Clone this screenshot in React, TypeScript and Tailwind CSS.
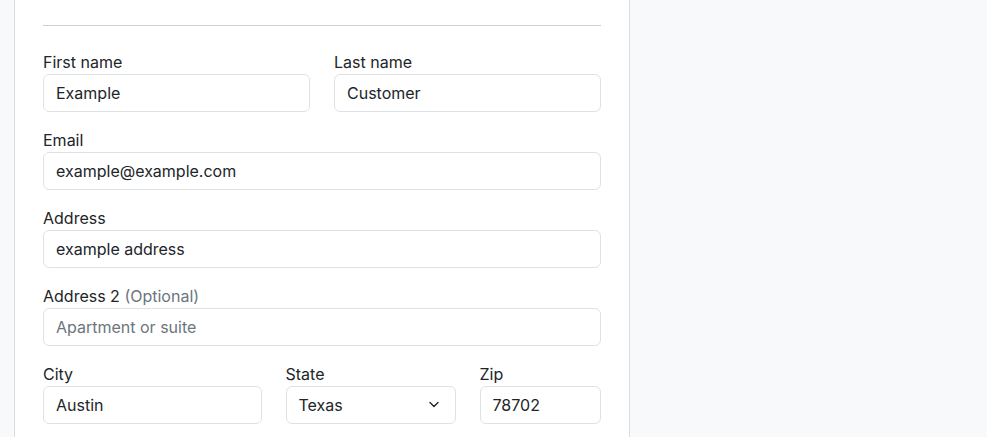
import React from 'react';

const inputCls =
  'block w-full h-[38px] px-3 py-1.5 text-base leading-6 text-[#212529] bg-white border border-[#dee2e6] rounded-md outline-none placeholder:text-[#6c757d]';

const labelCls = 'block text-base leading-6 text-[#212529]';

function Field({
  label,
  optional,
  children,
  className = '',
}: {
  label: string;
  optional?: boolean;
  children: React.ReactNode;
  className?: string;
}) {
  return (
    <div className={className}>
      <label className={labelCls}>
        {label}
        {optional && <span className="text-[#6c757d]"> (Optional)</span>}
      </label>
      {children}
    </div>
  );
}

export default function App() {
  return (
    <div
      className="flex w-full h-[437px] overflow-hidden bg-[#f8f9fb]"
      style={{ fontFamily: 'Inter, "Liberation Sans", Arial, sans-serif' }}
    >
      <div className="w-[15px] shrink-0 border-r border-[#d9dbde]" />
      <div className="w-[615px] shrink-0 bg-white border-r border-[#d9dbde] px-[28px]">
        <hr className="mt-[25px] border-0 border-t border-[#cfd1d4]" />
        <div className="grid grid-cols-12 gap-x-6 gap-y-4 mt-[24px]">
          <Field label="First name" className="col-span-6">
            <input className={inputCls} defaultValue="Example" />
          </Field>
          <Field label="Last name" className="col-span-6">
            <input className={inputCls} defaultValue="Customer" />
          </Field>
          <Field label="Email" className="col-span-12">
            <input className={inputCls} defaultValue="example@example.com" />
          </Field>
          <Field label="Address" className="col-span-12">
            <input className={inputCls} defaultValue="example address" />
          </Field>
          <Field label="Address 2" optional className="col-span-12">
            <input className={inputCls} placeholder="Apartment or suite" />
          </Field>
          <Field label="City" className="col-span-5">
            <input className={inputCls} defaultValue="Austin" />
          </Field>
          <Field label="State" className="col-span-4">
            <div className="relative">
              <select className={inputCls + ' appearance-none pr-9'} defaultValue="Texas">
                <option>Texas</option>
                <option>California</option>
              </select>
              <svg
                className="absolute right-[17px] top-[15px] pointer-events-none"
                width="10"
                height="7"
                viewBox="0 0 10 7"
                fill="none"
              >
                <path d="M1 1.5l4 4 4-4" stroke="#212529" strokeWidth="1.4" strokeLinecap="round" strokeLinejoin="round" />
              </svg>
            </div>
          </Field>
          <Field label="Zip" className="col-span-3">
            <input className={inputCls} defaultValue="78702" />
          </Field>
        </div>
      </div>
      <div className="flex-1 bg-[#f8f9fb]" />
    </div>
  );
}
